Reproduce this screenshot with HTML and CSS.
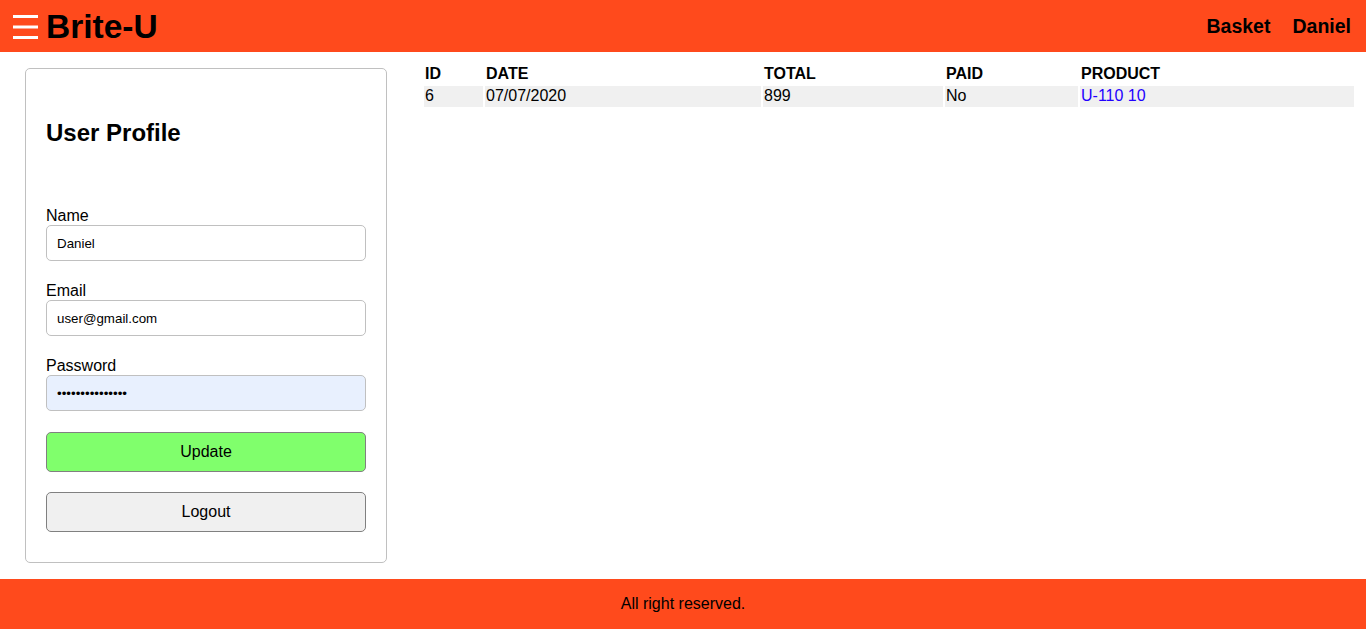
FILE: index.html
```html
<!DOCTYPE html>
<html lang="en">
<head>
<meta charset="utf-8">
<title>Brite-U</title>
<link rel="stylesheet" href="styles.css">
</head>
<body>
<div class="app">
  <header class="topbar">
    <div class="brand-group">
      <button class="menu-btn" aria-label="Open menu">
        <svg width="25" height="24" viewBox="0 0 25 24"><rect x="0" y="0" width="25" height="3" fill="#fff"/><rect x="0" y="10.5" width="25" height="3" fill="#fff"/><rect x="0" y="21" width="25" height="3" fill="#fff"/></svg>
      </button>
      <a class="brand" href="#">Brite-U</a>
    </div>
    <nav class="nav">
      <a href="#">Basket</a>
      <a href="#">Daniel</a>
    </nav>
  </header>
  <main class="profile">
    <section class="profile-card">
      <h2 class="profile-title">User Profile</h2>
      <form class="profile-form">
        <div class="field">
          <label for="name">Name</label>
          <input id="name" type="text" value="Daniel">
        </div>
        <div class="field">
          <label for="email">Email</label>
          <input id="email" type="email" value="user@gmail.com">
        </div>
        <div class="field">
          <label for="password">Password</label>
          <input id="password" class="autofill" type="password" value="danielpassword1">
        </div>
        <button type="button" class="btn btn-primary">Update</button>
        <button type="button" class="btn btn-secondary">Logout</button>
      </form>
    </section>
    <section class="orders">
      <table class="orders-table">
        <thead>
          <tr>
            <th class="col-id">ID</th>
            <th class="col-date">DATE</th>
            <th class="col-total">TOTAL</th>
            <th class="col-paid">PAID</th>
            <th>PRODUCT</th>
          </tr>
        </thead>
        <tbody>
          <tr>
            <td>6</td>
            <td>07/07/2020</td>
            <td>899</td>
            <td>No</td>
            <td><a href="#" class="product-link">U-110 10</a></td>
          </tr>
        </tbody>
      </table>
    </section>
  </main>
  <footer class="footer">All right reserved.</footer>
</div>
</body>
</html>
```
FILE: styles.css
```css
html, body {
  margin: 0;
  height: 100%;
}
body {
  font-family: "Liberation Sans", Arial, Helvetica, sans-serif;
  font-size: 16px;
  color: #000;
  background: #fff;
}
.app {
  display: grid;
  grid-template-rows: 52px 1fr 50px;
  height: 100vh;
}
.topbar {
  background: #ff4a1c;
  display: flex;
  align-items: center;
  justify-content: space-between;
  padding: 0 15px 0 12.5px;
}
.brand-group {
  display: flex;
  align-items: center;
}
.menu-btn {
  background: none;
  border: none;
  padding: 0;
  margin: 2px 8.5px 0 0;
  width: 25px;
  height: 24px;
  display: flex;
  cursor: pointer;
}
.brand {
  font-size: 33.5px;
  font-weight: bold;
  color: #000;
  text-decoration: none;
  position: relative;
  top: 1px;
}
.nav {
  display: flex;
  gap: 22px;
}
.nav a {
  font-size: 19.5px;
  font-weight: bold;
  color: #000;
  text-decoration: none;
}
.profile {
  display: flex;
  align-items: flex-start;
}
.profile-card {
  margin: 16px 0 0 25px;
  width: 320px;
  border: 1px solid #c0c0c0;
  border-radius: 5px;
  padding: 20px 20px 30px;
}
.profile-title {
  font-size: 24px;
  font-weight: bold;
  margin: 30px 0 59.6px;
}
.profile-form {
  display: flex;
  flex-direction: column;
  gap: 20.6px;
}
.field {
  display: flex;
  flex-direction: column;
}
.field label {
  font-size: 16px;
  line-height: 18.4px;
}
.field input {
  box-sizing: border-box;
  height: 36px;
  width: 100%;
  border: 1px solid #c0c0c0;
  border-radius: 5px;
  padding: 0 10px;
  font-family: "Liberation Sans", Arial, sans-serif;
  font-size: 13.333px;
  color: #000;
  background: #fff;
}
.field input.autofill {
  background: #e8f0fe;
}
.btn {
  box-sizing: border-box;
  height: 40px;
  width: 100%;
  border: 1px solid #808080;
  border-radius: 5px;
  font-family: "Liberation Sans", Arial, sans-serif;
  font-size: 16px;
  color: #000;
  cursor: pointer;
}
.btn-primary {
  background: #80ff6c;
}
.btn-secondary {
  background: #f0f0f0;
}
.orders {
  flex: 1;
  margin: 10px 10px 0 35px;
}
.orders-table {
  width: 100%;
  table-layout: fixed;
  border-collapse: separate;
  border-spacing: 2px;
}
.orders-table th,
.orders-table td {
  padding: 1px;
  text-align: left;
  font-size: 16px;
  line-height: 18.4px;
}
.orders-table th {
  font-weight: bold;
}
.orders-table td {
  background: #f0f0f0;
}
.col-id { width: 57px; }
.col-date { width: 274px; }
.col-total { width: 178px; }
.col-paid { width: 131px; }
.product-link {
  color: #2200ff;
  text-decoration: none;
}
.footer {
  background: #ff4a1c;
  display: flex;
  align-items: center;
  justify-content: center;
  font-size: 16px;
}
```
